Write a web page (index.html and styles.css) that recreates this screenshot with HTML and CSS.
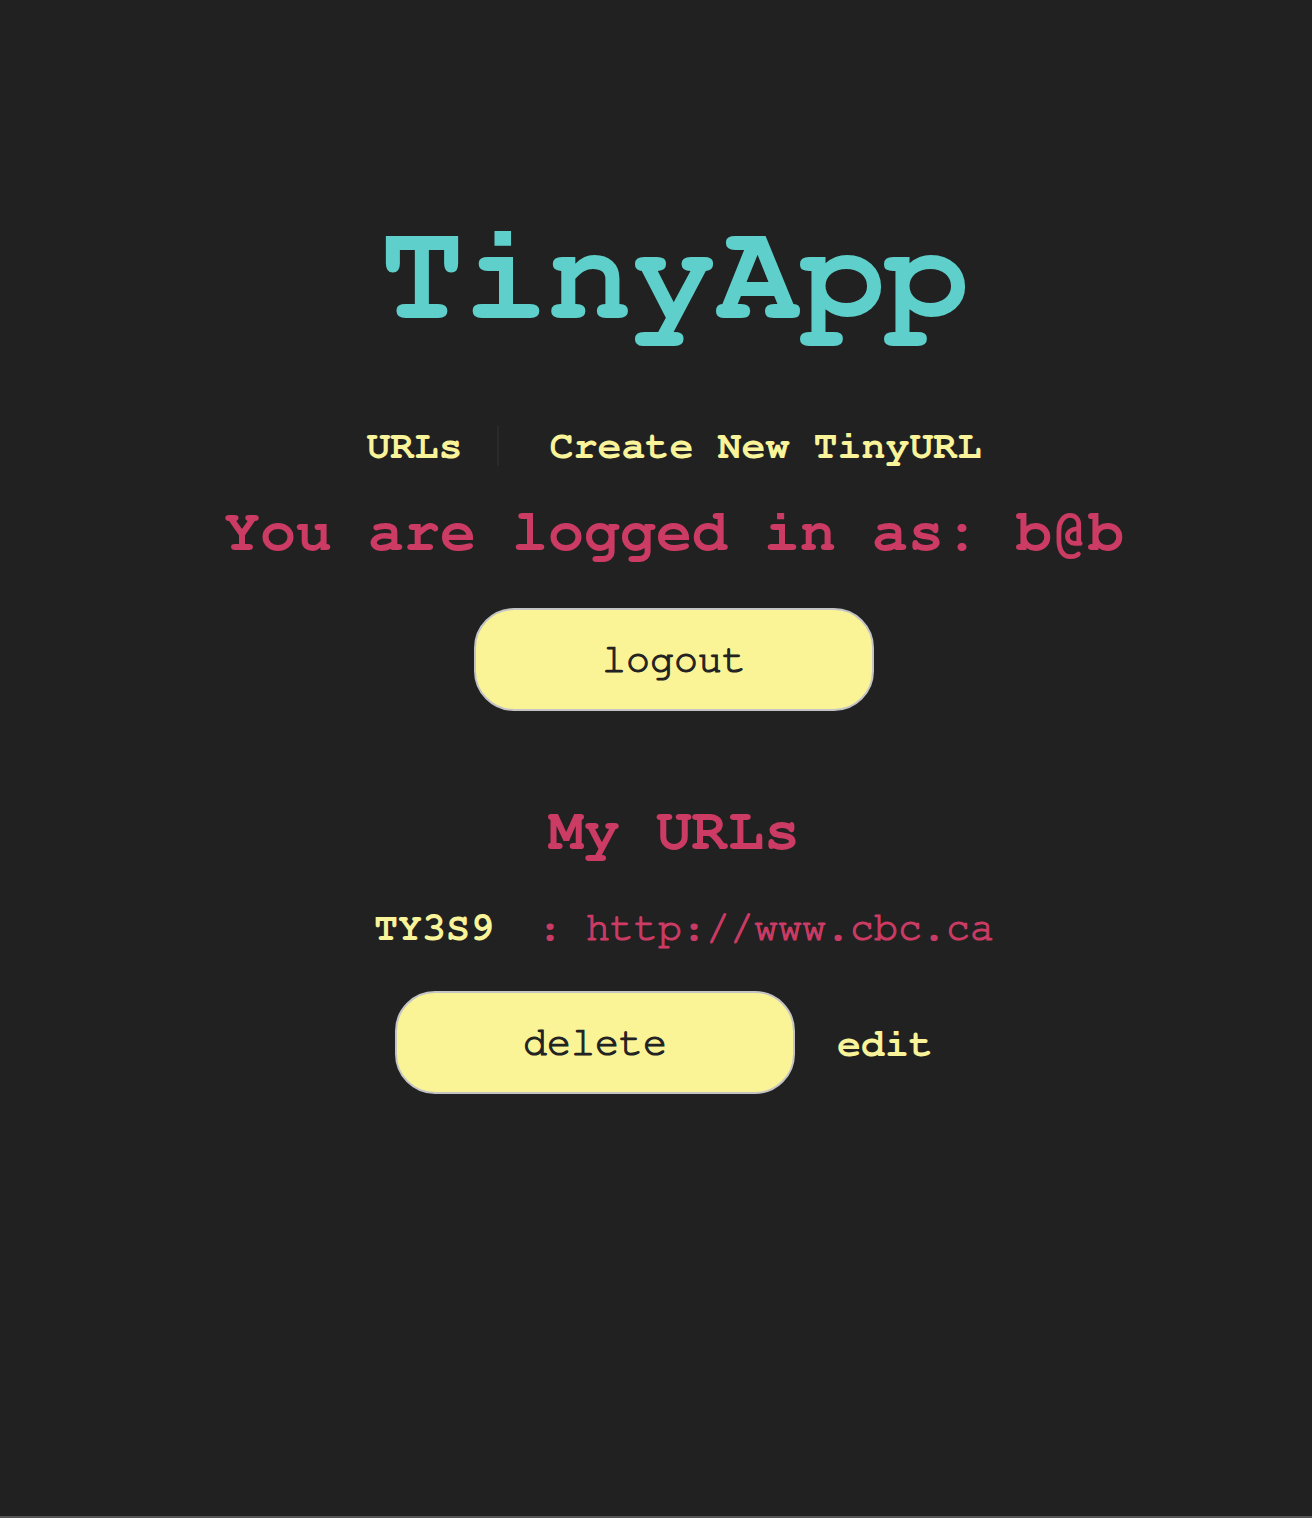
FILE: index.html
```html
<!DOCTYPE html>
<html lang="en">
<head>
<meta charset="utf-8">
<title>TinyApp</title>
<link rel="stylesheet" href="styles.css">
</head>
<body>
<div class="page">
  <h1 class="title">TinyApp</h1>
  <nav class="nav">
    <a class="nav-link nav-first" href="#">URLs</a>
    <a class="nav-link" href="#">Create New TinyURL</a>
  </nav>
  <h2 class="login">You are logged in as: b@b</h2>
  <form class="logout-form">
    <button class="btn" type="button">logout</button>
  </form>
  <h2 class="section">My URLs</h2>
  <div class="url-row">
    <span class="short">TY3S9</span><span class="long">: http://www.cbc.ca</span>
  </div>
  <div class="actions">
    <button class="btn" type="button">delete</button>
    <a class="edit" href="#">edit</a>
  </div>
</div>
</body>
</html>
```

FILE: styles.css
```css
html, body {
  margin: 0;
  padding: 0;
}
body {
  background: #212121;
  font-family: "Nimbus Mono PS", "Nimbus Mono L", "FreeMono", "Courier 10 Pitch", "Liberation Mono", "Courier New", monospace;
  min-height: 1516px;
  border-bottom: 2px solid #555555;
  box-sizing: content-box;
}
.page {
  display: flex;
  flex-direction: column;
  align-items: center;
  padding-left: 36px;
}
.title {
  margin: 206px 0 0;
  font-size: 140px;
  font-weight: bold;
  line-height: normal;
  color: #5ecfca;
}
.nav {
  margin-top: 80px;
  display: flex;
  align-items: center;
}
.nav-link {
  font-size: 40px;
  font-weight: bold;
  color: #f9f39a;
  text-decoration: none;
  line-height: normal;
}
.nav-first {
  padding-right: 34px;
  border-right: 2px solid #2a2a2e;
  margin-right: 51px;
}
.login, .section {
  font-size: 60px;
  font-weight: bold;
  color: #cc3b64;
  line-height: normal;
  margin: 36px 0 0;
}
.section {
  margin-top: 90px;
}
.logout-form {
  margin: 46px 0 0;
}
.btn {
  width: 400px;
  height: 103px;
  box-sizing: border-box;
  border: 2px solid #c4c4c4;
  border-radius: 40px;
  background: #faf497;
  color: #222222;
  font-family: inherit;
  font-size: 40px;
  -webkit-text-stroke: 1.2px #222222;
  padding: 0;
}
.url-row {
  margin-top: 47px;
  font-size: 40px;
  line-height: normal;
  padding-left: 20px;
}
.short {
  font-weight: bold;
  color: #f9f39a;
}
.long {
  color: #cc3b64;
  -webkit-text-stroke: 1.2px #cc3b64;
  margin-left: 44px;
}
.actions {
  margin-top: 43px;
  display: flex;
  align-items: center;
  padding-right: 20px;
}
.edit {
  margin-left: 42px;
  font-size: 40px;
  font-weight: bold;
  color: #f9f39a;
  text-decoration: none;
  padding-top: 2px;
}
```
